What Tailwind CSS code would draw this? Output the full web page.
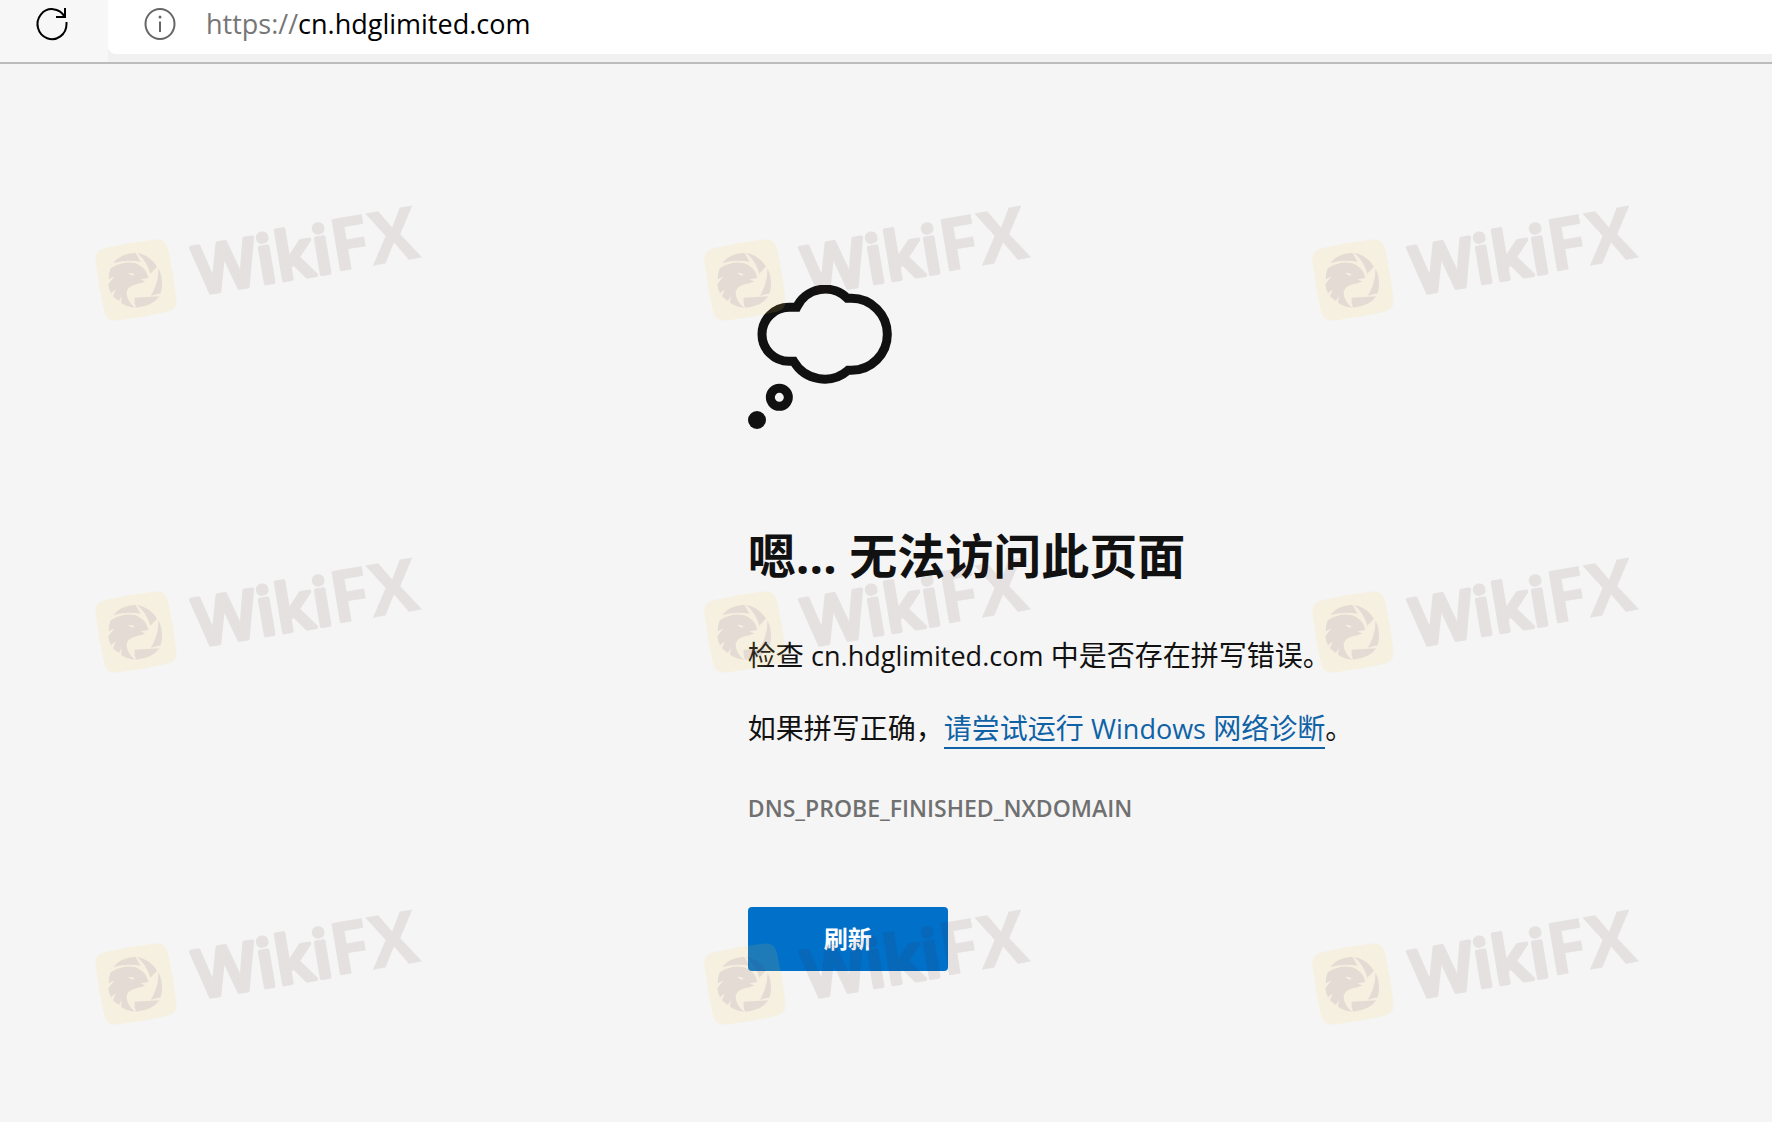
<!DOCTYPE html>
<html lang="zh-CN">
<head>
<meta charset="utf-8">
<meta name="viewport" content="width=device-width, initial-scale=1">
<title>cn.hdglimited.com</title>
<script src="https://cdn.jsdelivr.net/npm/@tailwindcss/browser@4"></script>
</head>
<body class="relative flex min-h-screen flex-col overflow-x-hidden bg-[#f5f5f5] font-['Open_Sans','Noto_Sans_CJK_SC',sans-serif] text-[#111]">

<!-- browser toolbar -->
<header class="flex h-16 items-start border-b-2 border-[#bcbcbc] bg-[#f7f7f7]">
  <button type="button" aria-label="刷新页面" class="flex h-12 w-27 shrink-0 items-center pl-8">
    <svg class="h-10 w-10" viewBox="4 0 40 40" fill="none" stroke="#000" stroke-width="2">
      <path d="M38.500 18V20A14.500 15 0 1 1 36.500 12.500"/>
      <path d="M37 4V13H28"/>
    </svg>
  </button>
  <div class="h-[62px] grow bg-[#f1f1f1]">
    <div class="flex h-[54px] items-start rounded-bl-lg bg-white pl-8">
      <svg class="mt-1 h-10 w-10 shrink-0" viewBox="0 0 40 40" fill="none" stroke="#666" stroke-width="2">
        <ellipse cx="20" cy="20" rx="14.500" ry="15"/>
        <path d="M20 17.500V28"/>
        <circle cx="20" cy="13" r="1.500" fill="#666" stroke="none"/>
      </svg>
      <a href="https://cn.hdglimited.com" class="ml-[26px] text-[27px] leading-12 text-black"><span class="text-[#767676]">https://</span>cn.hdglimited.com</a>
    </div>
  </div>
</header>

<!-- error message -->
<main class="flex flex-col items-start pt-[221px] pl-[42.2%]">
  <svg class="h-36 w-36" viewBox="174 285 432 432" fill="none" stroke="#111" stroke-width="27">
    <path d="M297 352H320A94 94 0 0 1 472 325H484A108 108 0 0 1 484 541H474A107 107 0 0 1 311 514H297A81 81 0 0 1 297 352Z"/>
    <circle cx="268" cy="622" r="27"/>
    <circle cx="201" cy="690" r="27" fill="#111" stroke="none"/>
  </svg>
  <h1 class="mt-24 text-5xl leading-[62px] font-bold">嗯… 无法访问此页面</h1>
  <p class="mt-12 text-[28px] leading-10">检查 <span class="text-[27px]">cn.hdglimited.com</span> 中是否存在拼写错误。</p>
  <p class="mt-8 text-[28px] leading-10">如果拼写正确，<a href="#" class="border-b-2 border-[#0f62a6] text-[#0f62a6]">请尝试运行 <span class="text-[27px]">Windows</span> 网络诊断</a>。</p>
  <p class="mt-10 text-[23px] leading-[38px] font-semibold text-[#707070]">DNS_PROBE_FINISHED_NXDOMAIN</p>
  <button type="button" class="mt-20 h-16 w-50 rounded-sm bg-[#0070c9] text-2xl font-bold text-white">刷新</button>
</main>

<!-- watermark -->
<svg class="hidden" aria-hidden="true">
  <symbol id="mark" viewBox="0 0 1080 450">
    <g transform="rotate(-9.500 168 270)">
      <path d="M90 160Q168 156 246 160Q276 162 278 192Q282 270 278 348Q276 378 246 380Q168 384 90 380Q60 378 58 348Q54 270 58 192Q60 162 90 160Z" fill="#f5cc40" opacity=".12"/>
    </g>
    <g fill="#402070" opacity=".09">
      <path d="M100 219Q124 190 166 188L182 215Q140 208 100 219Z"/>
      <path d="M171 188Q210 196 231 230L211 251Q200 212 171 188Z"/>
      <path d="M235 235Q253 268 242 310L213 317Q237 276 235 235Z"/>
      <path d="M164 323L238 319Q216 350 168 353Q162 340 164 323Z"/>
      <path d="M92 235Q128 212 164 219Q198 230 205 264L182 268Q191 275 198 273Q182 281 168 283Q139 290 140 312Q143 336 165 353Q140 350 123 338L126 318L116 333L99 319L108 297L93 310Q86 298 85 282L104 259L86 268Q86 248 92 235ZM144 248Q152 258 164 256L160 250Z" fill-rule="evenodd"/>
    </g>
    <g transform="translate(355 314) rotate(-9.500)" font-family="Open Sans, sans-serif" fill="#502020" stroke="#502020" opacity=".09">
      <text font-size="200" font-weight="600" stroke-width="12" stroke-linejoin="round">Wiki</text>
      <text x="413" font-size="219" font-weight="700" stroke-width="2">FX</text>
    </g>
  </symbol>
</svg>
<div aria-hidden="true" class="pointer-events-none absolute inset-x-0 top-[190px] grid gap-[202px] pr-[115px] pl-20">
  <div class="flex justify-between">
    <svg class="h-[150px] w-[360px]"><use href="#mark"/></svg>
    <svg class="h-[150px] w-[360px]"><use href="#mark"/></svg>
    <svg class="h-[150px] w-[360px]"><use href="#mark"/></svg>
  </div>
  <div class="flex justify-between">
    <svg class="h-[150px] w-[360px]"><use href="#mark"/></svg>
    <svg class="h-[150px] w-[360px]"><use href="#mark"/></svg>
    <svg class="h-[150px] w-[360px]"><use href="#mark"/></svg>
  </div>
  <div class="flex justify-between">
    <svg class="h-[150px] w-[360px]"><use href="#mark"/></svg>
    <svg class="h-[150px] w-[360px]"><use href="#mark"/></svg>
    <svg class="h-[150px] w-[360px]"><use href="#mark"/></svg>
  </div>
</div>
</body>
</html>
